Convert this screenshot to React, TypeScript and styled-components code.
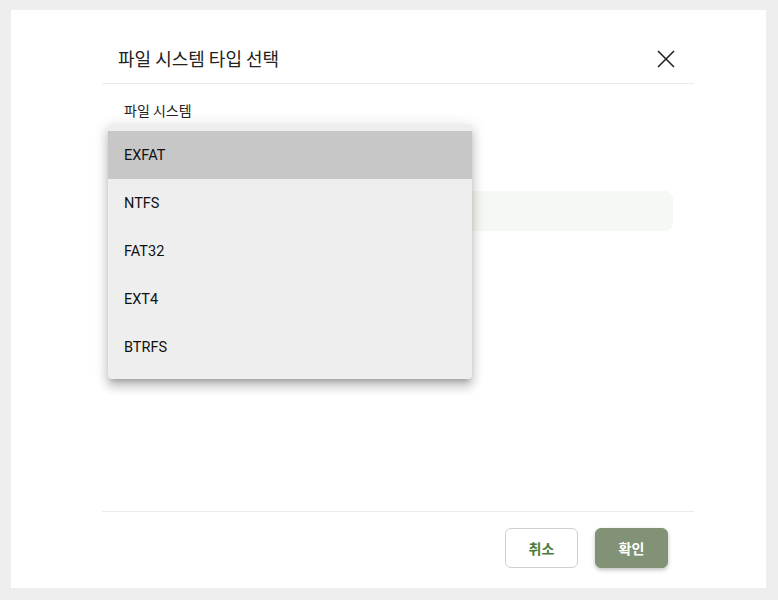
import styled, { createGlobalStyle } from 'styled-components';

const Global = createGlobalStyle`
  html, body { margin: 0; padding: 0; background: #eeeeee; }
  body { font-family: Roboto, "Noto Sans CJK KR", sans-serif; }
`;

const Page = styled.div`
  padding: 10px 12px 12px 11px;
  box-sizing: border-box;
  height: 600px;
`;

const Panel = styled.div`
  width: 755px;
  height: 578px;
  background: #ffffff;
  padding: 0 72px 0 91px;
  box-sizing: border-box;
  display: flex;
  flex-direction: column;
`;

const Header = styled.div`
  height: 74px;
  display: flex;
  align-items: flex-end;
  justify-content: space-between;
  padding: 0 16px 12px;
  box-sizing: border-box;
  border-bottom: 1px solid #ebebeb;
`;

const Title = styled.h2`
  margin: 0;
  font-family: "Noto Sans CJK KR", sans-serif;
  font-size: 18px;
  font-weight: 400;
  line-height: 26px;
  color: #222;
`;

const Close = styled.button`
  border: 0;
  background: none;
  padding: 0;
  width: 24px;
  height: 24px;
  display: flex;
  align-items: center;
  justify-content: center;
  margin: 0 0 0 0;
`;

const Body = styled.div`
  position: relative;
  flex: 1;
  padding: 16px 21px 0 22px;
  border-bottom: 1px solid #ebebeb;
`;

const Label = styled.div`
  font-family: "Noto Sans CJK KR", sans-serif;
  font-size: 14px;
  color: #222;
  line-height: 20px;
`;

const Trigger = styled.div`
  height: 40px;
  margin-top: 11px;
`;

const Field = styled.div`
  height: 40px;
  margin-top: 20px;
  border-radius: 8px;
  background: #f6f8f3;
`;

const Menu = styled.ul`
  position: absolute;
  left: 6px;
  top: 40px;
  width: 364px;
  margin: 0;
  padding: 7px 0 8px;
  list-style: none;
  background: #eeeeee;
  border-radius: 4px;
  box-shadow: 0 5px 5px -3px rgba(0, 0, 0, 0.2), 0 8px 10px 1px rgba(0, 0, 0, 0.14),
    0 3px 14px 2px rgba(0, 0, 0, 0.12);
`;

const Item = styled.li<{ $active?: boolean }>`
  height: 48px;
  display: flex;
  align-items: center;
  padding: 0 16px;
  font-size: 14.5px;
  color: #111;
  background: ${(p) => (p.$active ? '#c7c7c7' : 'transparent')};
`;

const Footer = styled.div`
  height: 76px;
  display: flex;
  align-items: flex-start;
  justify-content: flex-end;
  gap: 17px;
  padding: 16px 26px 0 0;
  box-sizing: border-box;
`;

const Button = styled.button<{ $primary?: boolean }>`
  width: 73px;
  height: 40px;
  border-radius: 6px;
  font-family: "Noto Sans CJK KR", sans-serif;
  font-size: 14px;
  font-weight: 700;
  border: 1px solid ${(p) => (p.$primary ? '#819276' : '#cfcfcf')};
  background: ${(p) => (p.$primary ? '#819276' : '#ffffff')};
  color: ${(p) => (p.$primary ? '#ffffff' : '#4d7a38')};
  box-shadow: ${(p) => (p.$primary ? '0 2px 4px rgba(0,0,0,0.25)' : 'none')};
`;

const options = ['EXFAT', 'NTFS', 'FAT32', 'EXT4', 'BTRFS'];

export default function App() {
  return (
    <>
      <Global />
      <Page>
        <Panel>
          <Header>
            <Title>파일 시스템 타입 선택</Title>
            <Close aria-label="닫기">
              <svg width="20" height="20" viewBox="0 0 20 20">
                <path d="M2 2L18 18M18 2L2 18" stroke="#222" strokeWidth="1.6" fill="none" />
              </svg>
            </Close>
          </Header>
          <Body>
            <Label>파일 시스템</Label>
            <Trigger />
            <Field />
            <Menu>
              {options.map((o, i) => (
                <Item key={o} $active={i === 0}>
                  {o}
                </Item>
              ))}
            </Menu>
          </Body>
          <Footer>
            <Button>취소</Button>
            <Button $primary>확인</Button>
          </Footer>
        </Panel>
      </Page>
    </>
  );
}
